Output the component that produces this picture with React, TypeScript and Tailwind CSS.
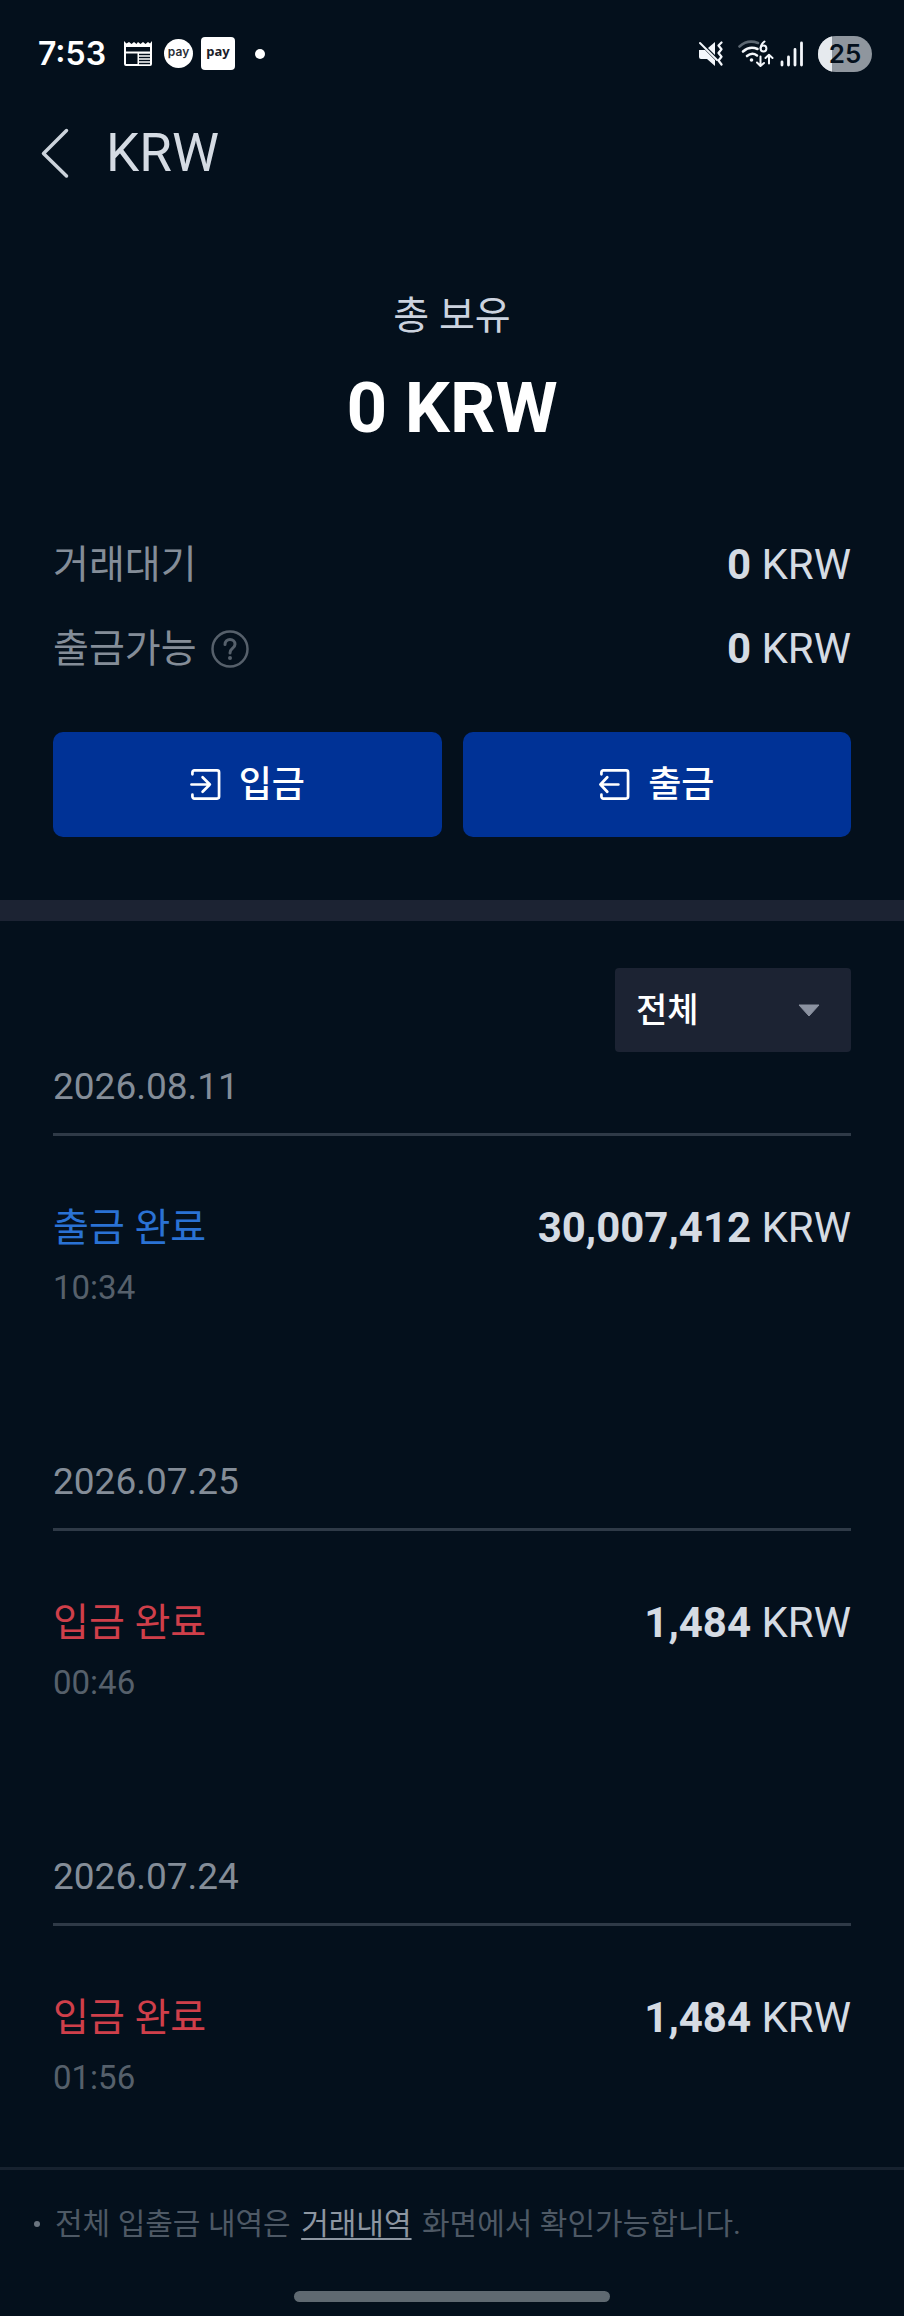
import type { ReactNode } from "react";

type Transaction = {
  date: string;
  type: "deposit" | "withdraw";
  label: string;
  time: string;
  amount: string;
};

const transactions: Transaction[] = [
  { date: "2026.08.11", type: "withdraw", label: "출금 완료", time: "10:34", amount: "30,007,412" },
  { date: "2026.07.25", type: "deposit", label: "입금 완료", time: "00:46", amount: "1,484" },
  { date: "2026.07.24", type: "deposit", label: "입금 완료", time: "01:56", amount: "1,484" },
];

function CalendarIcon() {
  return (
    <svg width="28" height="26" viewBox="0 0 28 26" fill="none" aria-hidden="true">
      <path d="M0 0l2.5 2.5L5 1l2.5 2L10 1l2.5 2L14 1l2.5 2L19 1l2.5 2L24 1l2 1.500L28 0v23a2 2 0 0 1-2 2H2a2 2 0 0 1-2-2z" fill="#fff" />
      <path d="M2 6h24v4.500H2zM2 12.500h11.500V23H2z" fill="#04101c" />
      <path d="M15 13.500h11M15 16.500h11M15 19.500h11M15 22.500h11" stroke="#04101c" strokeWidth="1.500" />
    </svg>
  );
}

function MuteVibrateIcon() {
  return (
    <svg width="26" height="26" viewBox="0 0 26 26" fill="none" aria-hidden="true">
      <path d="M1 9h6l10 10v6l-8-7H3a2 2 0 0 1-2-2z" fill="#f4f7fb" />
      <path d="M10 7l7-6v13z" fill="#f4f7fb" />
      <path d="M2 2l17 17" stroke="#f4f7fb" strokeWidth="2" strokeLinecap="round" />
      <path d="M23.500 1.500l-3 3 3 3.800-3 3.700 3 3.700-3 3.800 3 4" stroke="#f4f7fb" strokeWidth="2.200" strokeLinecap="round" strokeLinejoin="round" />
    </svg>
  );
}

function WifiIcon() {
  return (
    <svg width="36" height="28" viewBox="0 0 36 28" fill="none" aria-hidden="true">
      <path d="M1.500 6.500C7 1.500 14 .8 20 3" stroke="#5c6772" strokeWidth="2.600" strokeLinecap="round" />
      <path d="M5 11.500C9.500 7.500 15 7 19.500 9M9 16c3-2.500 7-2.800 10-.5" stroke="#f4f7fb" strokeWidth="2.600" strokeLinecap="round" />
      <circle cx="13.500" cy="20" r="1.800" fill="#f4f7fb" />
      <circle cx="25.500" cy="8.500" r="2.900" stroke="#f4f7fb" strokeWidth="2" />
      <path d="M26.500 1.500c-2 1.500-3.700 4-3.900 6.500" stroke="#f4f7fb" strokeWidth="2" strokeLinecap="round" />
      <path d="M22.500 16.500v9m-3.500-3l3.500 3.500 3.500-3M31 23.500v-8m-3.500 2.500l3.500-3.200 3.500 3.200" stroke="#f4f7fb" strokeWidth="2" strokeLinecap="round" strokeLinejoin="round" />
    </svg>
  );
}

function SignalIcon() {
  return (
    <svg width="24" height="26" viewBox="0 0 24 26" fill="none" aria-hidden="true">
      <path d="M2 21v3M8.500 16v8M15 8.500V24M21.500 2v22" stroke="#f4f7fb" strokeWidth="2.800" strokeLinecap="round" />
    </svg>
  );
}

function StatusBar() {
  return (
    <div className="flex h-[107px] items-center justify-between pl-[38px] pr-8 text-white">
      <div className="flex items-center">
        <span className="mr-[18px] font-['Inter',sans-serif] text-[32px] leading-none font-semibold">7:53</span>
        <CalendarIcon />
        <span className="ml-3 flex size-[29px] items-center justify-center rounded-full bg-white pb-1 font-['Inter',sans-serif] text-xs leading-none font-semibold text-[#2b3038]">
          pay
        </span>
        <span className="ml-2 flex h-[33px] w-[34px] items-center justify-center rounded bg-white pb-1 font-['Noto_Sans',sans-serif] text-[13px] leading-none font-bold text-[#1b2028]">
          pay
        </span>
        <span className="ml-5 size-[10px] rounded-full bg-white" />
      </div>
      <div className="flex items-center">
        <MuteVibrateIcon />
        <span className="ml-[14px]">
          <WifiIcon />
        </span>
        <span className="ml-[6px]">
          <SignalIcon />
        </span>
        <span className="relative ml-[14px] flex h-9 w-[54px] items-center justify-center overflow-hidden rounded-full bg-[#8f969e]">
          <span className="absolute inset-y-0 left-0 w-1/4 bg-[#e6eaee]" />
          <span className="relative font-['Inter',sans-serif] text-[26px] leading-none font-semibold text-[#04101c]">25</span>
        </span>
      </div>
    </div>
  );
}

function DepositIcon() {
  return (
    <svg width="31" height="31" viewBox="0 0 32 32" fill="none" stroke="currentColor" strokeWidth="2.800" strokeLinecap="round" strokeLinejoin="round" aria-hidden="true">
      <path d="M2.500 5.500V3.500a2 2 0 0 1 2-2H28a2 2 0 0 1 2 2v25a2 2 0 0 1-2 2H4.500a2 2 0 0 1-2-2V26.500" />
      <path d="M1.500 16h19M13 8.500l7.500 7.500-7.500 7.500" />
    </svg>
  );
}

function WithdrawIcon() {
  return (
    <svg width="31" height="31" viewBox="0 0 32 32" fill="none" stroke="currentColor" strokeWidth="2.800" strokeLinecap="round" strokeLinejoin="round" aria-hidden="true">
      <path d="M2.500 5.500V3.500a2 2 0 0 1 2-2H28a2 2 0 0 1 2 2v25a2 2 0 0 1-2 2H4.500a2 2 0 0 1-2-2V26.500" />
      <path d="M20 16H1.500M8.500 8.500L1.500 16l7 7.500" />
    </svg>
  );
}

function Amount({ value }: { value: string }) {
  return (
    <span className="text-[42px] leading-[48px] text-[#d5dbe3]">
      <strong className="font-bold">{value}</strong> KRW
    </span>
  );
}

function ActionButton({ icon, children }: { icon: ReactNode; children: ReactNode }) {
  return (
    <button type="button" className="flex h-[105px] flex-1 items-center justify-center gap-[18px] rounded-[10px] bg-[#003296] text-4xl font-medium text-white">
      {icon}
      {children}
    </button>
  );
}

function TransactionGroup({ item }: { item: Transaction }) {
  return (
    <section className="pb-[139px] last:pb-0">
      <h2 className="border-b-[3px] border-[#2f3a47] pb-[11px] text-[37px] leading-[70px] text-[#848d98]">{item.date}</h2>
      <div className="flex items-start justify-between pt-[68px]">
        <div>
          <p className={`text-[39px] leading-[48px] ${item.type === "withdraw" ? "text-[#2a72d4]" : "text-[#cf3f4a]"}`}>{item.label}</p>
          <p className="mt-4 text-[33px] leading-10 text-[#56606b]">{item.time}</p>
        </div>
        <Amount value={item.amount} />
      </div>
    </section>
  );
}

export default function App() {
  return (
    <div className="flex min-h-screen w-full flex-col bg-[#04101c] font-['Roboto','Noto_Sans_CJK_KR',sans-serif]">
      <StatusBar />

      <header className="flex h-[92px] items-center gap-[34px] pl-[38px]">
        <button type="button" aria-label="뒤로" className="text-[#ccd3db]">
          <svg width="34" height="52" viewBox="0 0 34 52" fill="none" stroke="currentColor" strokeWidth="3.500" strokeLinecap="round" strokeLinejoin="round" aria-hidden="true">
            <path d="M28.500 3.500L5.500 26.500l23 22.500" />
          </svg>
        </button>
        <h1 className="text-[53px] leading-none text-[#d5dbe3]">KRW</h1>
      </header>

      <main className="flex flex-1 flex-col">
        {/* Balance */}
        <section className="px-[53px] pt-[87px] pb-[63px]">
          <div className="text-center">
            <p className="text-[39px] leading-[60px] text-[#ccd3df]">총 보유</p>
            <p className="mt-5 text-[71px] leading-[84px] font-bold text-white">0 KRW</p>
          </div>
          <dl className="mt-[73px]">
            <div className="flex h-[84px] items-center justify-between">
              <dt className="text-[39px] text-[#848d98]">거래대기</dt>
              <dd>
                <Amount value="0" />
              </dd>
            </div>
            <div className="flex h-[84px] items-center justify-between">
              <dt className="flex items-center gap-[14px] text-[39px] text-[#848d98]">
                출금가능
                <button type="button" aria-label="출금가능 안내" className="text-[#56606b]">
                  <svg width="38" height="38" viewBox="0 0 38 38" fill="none" stroke="currentColor" strokeWidth="2.500" strokeLinecap="round" aria-hidden="true">
                    <circle cx="19" cy="19" r="17.500" />
                    <path d="M14 14.500c0-3 2.200-5 5-5s5 2 5 4.700c0 2.300-1.300 3.300-2.800 4.500-1.400 1.100-2.200 2-2.200 4.300" strokeWidth="3" />
                    <circle cx="19" cy="28" r="2" fill="currentColor" stroke="none" />
                  </svg>
                </button>
              </dt>
              <dd>
                <Amount value="0" />
              </dd>
            </div>
          </dl>
          <div className="mt-[41px] flex gap-[21px]">
            <ActionButton icon={<DepositIcon />}>입금</ActionButton>
            <ActionButton icon={<WithdrawIcon />}>출금</ActionButton>
          </div>
        </section>

        <div className="h-[21px] bg-[#1c2333]" />

        {/* History */}
        <section id="history" className="px-[53px] pt-[47px] pb-[60px]">
          <div className="flex justify-end">
            <div className="relative w-[236px]">
              <select aria-label="거래 유형" className="h-[84px] w-full appearance-none rounded bg-[#1c2333] pl-[21px] text-[34px] font-medium text-white">
                <option>전체</option>
                <option>입금</option>
                <option>출금</option>
              </select>
              <svg className="pointer-events-none absolute top-9 right-[31px]" width="22" height="13" viewBox="0 0 22 13" aria-hidden="true">
                <path d="M1 1h20L11 12z" fill="#8b92a1" stroke="#8b92a1" strokeLinejoin="round" />
              </svg>
            </div>
          </div>
          <div>
            {transactions.map((item) => (
              <TransactionGroup key={item.date} item={item} />
            ))}
          </div>
        </section>
      </main>

      <footer className="border-t-[3px] border-[#17222f] px-[34px] pt-8 pb-[14px]">
        <p className="flex items-center gap-[15px] text-[30px] leading-[44px] text-[#4e5965]">
          <span className="size-[6px] shrink-0 rounded-full bg-[#6b7580]" />
          <span>
            전체 입출금 내역은{" "}
            <a href="#history" className="mx-[3px] text-[#8d96a1] underline decoration-2 underline-offset-4 [text-decoration-skip-ink:none]">
              거래내역
            </a>{" "}
            화면에서 확인가능합니다.
          </span>
        </p>
        <div className="mx-auto mt-[45px] h-[11px] w-[316px] rounded-full bg-[#5f6971]" />
      </footer>
    </div>
  );
}
